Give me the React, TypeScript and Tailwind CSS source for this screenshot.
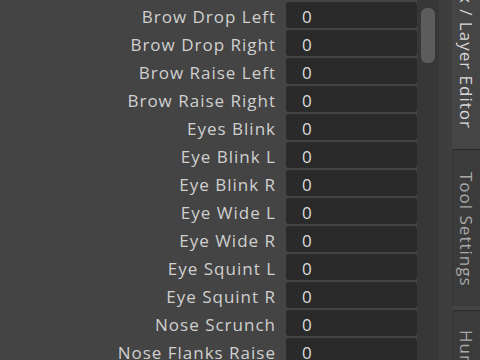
const rows = [
    "Brow Drop Left",
    "Brow Drop Right",
    "Brow Raise Left",
    "Brow Raise Right",
    "Eyes Blink",
    "Eye Blink L",
    "Eye Blink R",
    "Eye Wide L",
    "Eye Wide R",
    "Eye Squint L",
    "Eye Squint R",
    "Nose Scrunch",
    "Nose Flanks Raise",
]

function ChannelRow({ label }: { label: string }) {
    return (
        <div className="flex flex-row items-center h-[28px] shrink-0">
            <div className="w-[277px] text-right text-[17px] tracking-[1px] text-[#d0d0d0] pr-[1px] pt-[2px] leading-none whitespace-nowrap">
                {label}
            </div>
            <div className="ml-[9px] w-[131px] h-[26px] rounded-[3px] bg-[#2a2a2a] flex items-center pl-[16px] pt-[3px] text-[17px] text-[#dcdcdc] leading-none">
                0
            </div>
        </div>
    )
}

function SideTabs() {
    return (
        <div className="w-[28px] h-full flex flex-col shrink-0">
            <div className="h-[149px] shrink-0 bg-[#454545] flex flex-col justify-end items-center overflow-hidden pb-[20px]">
                <span className="[writing-mode:vertical-rl] whitespace-nowrap text-[17px] tracking-[1px] text-[#d8d8d8] leading-none">
                    Channel Box / Layer Editor
                </span>
            </div>
            <div className="h-[157px] shrink-0 bg-[#3b3b3b] border-t border-t-[#2a2a2a] border-l border-l-[#333] rounded-tl-[3px] flex flex-col items-center pt-[22px]">
                <span className="[writing-mode:vertical-rl] whitespace-nowrap text-[17px] tracking-[1px] text-[#a9a9a9] leading-none">
                    Tool Settings
                </span>
            </div>
            <div className="h-[4px] shrink-0 bg-[#454545]" />
            <div className="flex-1 bg-[#3b3b3b] border-t border-t-[#2a2a2a] border-l border-l-[#333] rounded-tl-[3px] flex flex-col items-center pt-[19px] overflow-hidden">
                <span className="[writing-mode:vertical-rl] whitespace-nowrap text-[17px] tracking-[1px] text-[#a9a9a9] leading-none">
                    HumanIK
                </span>
            </div>
        </div>
    )
}

export default function App() {
    return (
        <main
            className="w-[480px] h-[360px] bg-[#444444] flex flex-row overflow-hidden"
            style={{ fontFamily: '"Open Sans", "Noto Sans", sans-serif' }}
        >
            <div className="w-[417px] h-full flex flex-col pt-[1px] overflow-hidden shrink-0">
                {rows.map((r) => (
                    <ChannelRow key={r} label={r} />
                ))}
            </div>
            <div className="w-[22px] h-full bg-[#373737] shrink-0 pt-[8px] px-[4px]">
                <div className="h-[55px] rounded-[6px] bg-[#5c5c5c]" />
            </div>
            <div className="w-[13px] h-full bg-[#3e3e3e] shrink-0" />
            <SideTabs />
        </main>
    )
}
